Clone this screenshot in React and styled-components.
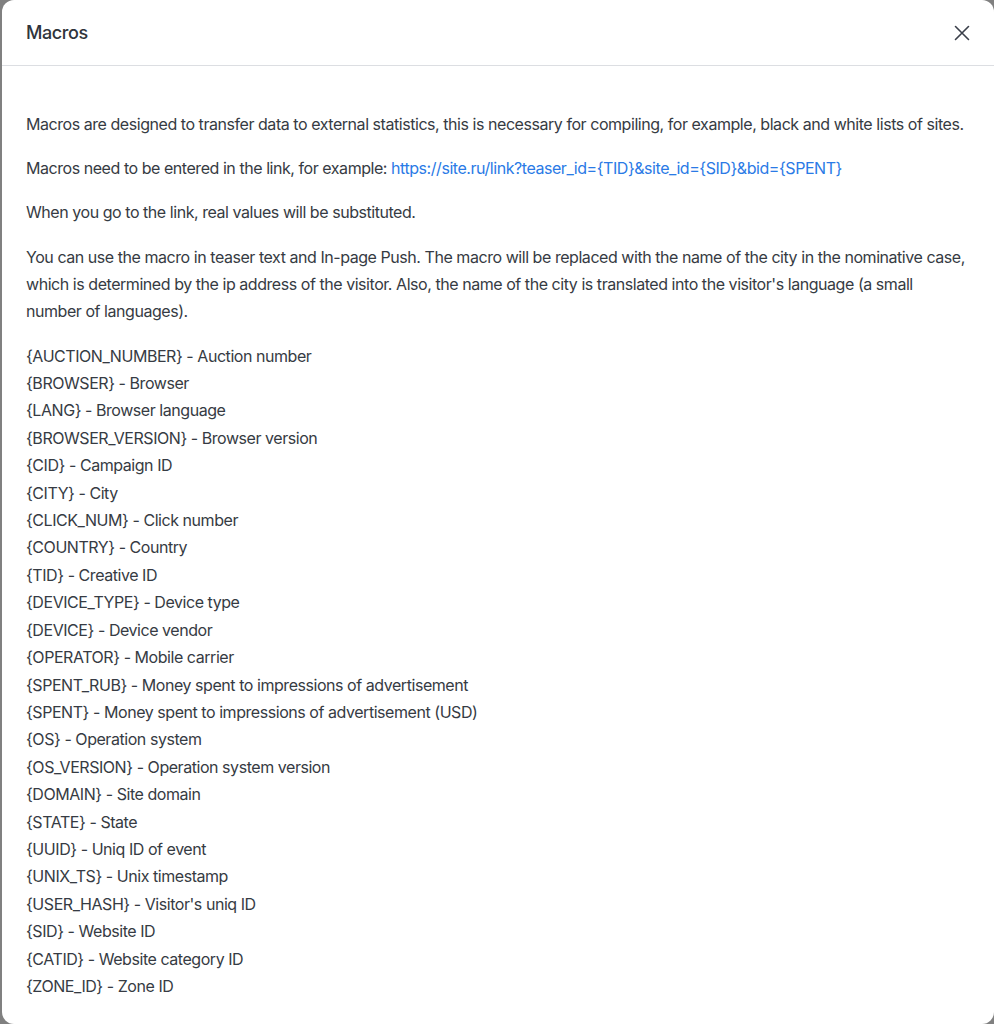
import React from "react";
import styled, { createGlobalStyle } from "styled-components";

const Global = createGlobalStyle`
  html, body { margin: 0; padding: 0; background: #808080; }
  body { font-family: Inter, "Open Sans", sans-serif; -webkit-font-smoothing: antialiased; }
  #root { height: 1024px; }
`;

const Backdrop = styled.div`
  height: 1024px;
  padding-left: 2px;
  box-sizing: border-box;
  display: flex;
`;

const Modal = styled.div`
  flex: 1;
  background: #fff;
  border-radius: 12px;
  display: flex;
  flex-direction: column;
  overflow: hidden;
`;

const Header = styled.div`
  height: 66px;
  flex: none;
  box-sizing: border-box;
  border-bottom: 1px solid #dcdee2;
  display: flex;
  align-items: center;
  justify-content: space-between;
  padding: 0 18px 0 24px;
`;

const Title = styled.h2`
  margin: 0;
  font-size: 18px;
  font-weight: 500;
  color: #2f343b;
  letter-spacing: -0.4px;
`;

const CloseButton = styled.button`
  border: 0;
  background: none;
  padding: 0;
  width: 28px;
  height: 28px;
  display: flex;
  align-items: center;
  justify-content: center;
  color: #3a3f4a;
  cursor: pointer;
`;

const Body = styled.div`
  padding: 45px 23px 0 24px;
  color: #363b43;
  font-size: 16px;
  line-height: 27.4px;
  letter-spacing: -0.45px;
`;

const Paragraph = styled.p`
  margin: 0 0 16.8px 0;
`;

const Link = styled.a`
  color: #2a7ae6;
  text-decoration: none;
`;

const MacroList = styled.ul`
  list-style: none;
  margin: 0;
  padding: 0;
`;

const MacroItem = styled.li`
  margin: 0;
`;

const macros = [
  ["{AUCTION_NUMBER}", "Auction number"],
  ["{BROWSER}", "Browser"],
  ["{LANG}", "Browser language"],
  ["{BROWSER_VERSION}", "Browser version"],
  ["{CID}", "Campaign ID"],
  ["{CITY}", "City"],
  ["{CLICK_NUM}", "Click number"],
  ["{COUNTRY}", "Country"],
  ["{TID}", "Creative ID"],
  ["{DEVICE_TYPE}", "Device type"],
  ["{DEVICE}", "Device vendor"],
  ["{OPERATOR}", "Mobile carrier"],
  ["{SPENT_RUB}", "Money spent to impressions of advertisement"],
  ["{SPENT}", "Money spent to impressions of advertisement (USD)"],
  ["{OS}", "Operation system"],
  ["{OS_VERSION}", "Operation system version"],
  ["{DOMAIN}", "Site domain"],
  ["{STATE}", "State"],
  ["{UUID}", "Uniq ID of event"],
  ["{UNIX_TS}", "Unix timestamp"],
  ["{USER_HASH}", "Visitor's uniq ID"],
  ["{SID}", "Website ID"],
  ["{CATID}", "Website category ID"],
  ["{ZONE_ID}", "Zone ID"],
];

export default function App() {
  const url = "https://site.ru/link?teaser_id={TID}&site_id={SID}&bid={SPENT}";
  return (
    <>
      <Global />
      <Backdrop>
        <Modal>
          <Header>
            <Title>Macros</Title>
            <CloseButton aria-label="Close">
              <svg width="16" height="16" viewBox="0 0 16 16" fill="none" stroke="currentColor" strokeWidth="1.6" strokeLinecap="round">
                <path d="M1.5 1.5L14.5 14.5M14.5 1.5L1.5 14.5" />
              </svg>
            </CloseButton>
          </Header>
          <Body>
            <Paragraph>
              Macros are designed to transfer data to external statistics, this is necessary for compiling, for example, black and white lists of sites.
            </Paragraph>
            <Paragraph>
              Macros need to be entered in the link, for example: <Link href="#">{url}</Link>
            </Paragraph>
            <Paragraph>When you go to the link, real values will be substituted.</Paragraph>
            <Paragraph>
              You can use the macro in teaser text and In-page Push. The macro will be replaced with the name of the city in the nominative case, which is determined by the ip address of the visitor. Also, the name of the city is translated into the visitor's language (a small number of languages).
            </Paragraph>
            <MacroList>
              {macros.map(([k, v]) => (
                <MacroItem key={k}>
                  {k} - {v}
                </MacroItem>
              ))}
            </MacroList>
          </Body>
        </Modal>
      </Backdrop>
    </>
  );
}
